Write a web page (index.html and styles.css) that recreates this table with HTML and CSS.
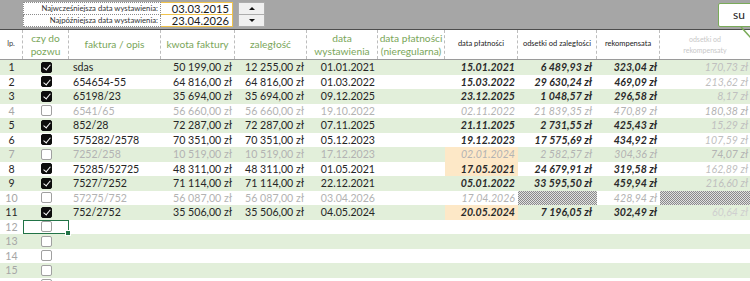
FILE: index.html
```html
<!DOCTYPE html>
<html lang="pl">
<head>
<meta charset="utf-8">
<link rel="stylesheet" href="styles.css">
</head>
<body>
<div class="sheet">
  <div class="topbar">
    <div class="filter">
      <div class="frow"><span class="flabel">Najwcześniejsza data wystawienia:</span><span class="fval">03.03.2015</span></div>
      <div class="frow"><span class="flabel">Najpóźniejsza data wystawienia:</span><span class="fval">23.04.2026</span></div>
    </div>
    <div class="spin">
      <button class="sbtn"><span class="tri up"></span></button>
      <button class="sbtn"><span class="tri down"></span></button>
    </div>
  </div>

  <div class="row head">
    <div class="h lp">lp.</div>
    <div class="h g">czy do<br>pozwu</div>
    <div class="h g">faktura / opis</div>
    <div class="h g">kwota faktury</div>
    <div class="h g">zaległość</div>
    <div class="h g">data<br>wystawienia</div>
    <div class="h g">data płatności<br>(nieregularna)</div>
    <div class="h k">data płatności</div>
    <div class="h k">odsetki od zaległości</div>
    <div class="h k">rekompensata</div>
    <div class="h lg">odsetki od<br>rekompensaty</div>
  </div>

  <div class="body">
    <div class="row z"><div class="c n">1</div><div class="c cb"><span class="box on"></span></div><div class="c t">sdas</div><div class="c r">50 199,00 zł</div><div class="c r">12 255,00 zł</div><div class="c r">01.01.2021</div><div class="c"></div><div class="c r i">15.01.2021</div><div class="c r i p5">6 489,93 zł</div><div class="c r i">323,04 zł</div><div class="c r ig">170,73 zł</div></div>
    <div class="row"><div class="c n">2</div><div class="c cb"><span class="box on"></span></div><div class="c t">654654-55</div><div class="c r">64 816,00 zł</div><div class="c r">64 816,00 zł</div><div class="c r">01.03.2022</div><div class="c"></div><div class="c r i">15.03.2022</div><div class="c r i p5">29 630,24 zł</div><div class="c r i">469,09 zł</div><div class="c r ig">213,62 zł</div></div>
    <div class="row z"><div class="c n">3</div><div class="c cb"><span class="box on"></span></div><div class="c t">65198/23</div><div class="c r">35 694,00 zł</div><div class="c r">35 694,00 zł</div><div class="c r">09.12.2025</div><div class="c"></div><div class="c r i">23.12.2025</div><div class="c r i p5">1 048,57 zł</div><div class="c r i">296,58 zł</div><div class="c r ig">8,17 zł</div></div>
    <div class="row off"><div class="c n">4</div><div class="c cb"><span class="box"></span></div><div class="c t">6541/65</div><div class="c r">56 660,00 zł</div><div class="c r">56 660,00 zł</div><div class="c r">19.10.2022</div><div class="c"></div><div class="c r i">02.11.2022</div><div class="c r i p5">21 839,35 zł</div><div class="c r i">470,89 zł</div><div class="c r ig">180,38 zł</div></div>
    <div class="row z"><div class="c n">5</div><div class="c cb"><span class="box on"></span></div><div class="c t">852/28</div><div class="c r">72 287,00 zł</div><div class="c r">72 287,00 zł</div><div class="c r">07.11.2025</div><div class="c"></div><div class="c r i">21.11.2025</div><div class="c r i p5">2 731,55 zł</div><div class="c r i">425,43 zł</div><div class="c r ig">15,29 zł</div></div>
    <div class="row"><div class="c n">6</div><div class="c cb"><span class="box on"></span></div><div class="c t">575282/2578</div><div class="c r">70 351,00 zł</div><div class="c r">70 351,00 zł</div><div class="c r">05.12.2023</div><div class="c"></div><div class="c r i">19.12.2023</div><div class="c r i p5">17 575,69 zł</div><div class="c r i">434,92 zł</div><div class="c r ig">107,59 zł</div></div>
    <div class="row z off"><div class="c n">7</div><div class="c cb"><span class="box"></span></div><div class="c t">7252/258</div><div class="c r">10 519,00 zł</div><div class="c r">10 519,00 zł</div><div class="c r">17.12.2023</div><div class="c"></div><div class="c r i peach">02.01.2024</div><div class="c r i p5">2 582,57 zł</div><div class="c r i">304,36 zł</div><div class="c r ig">74,07 zł</div></div>
    <div class="row"><div class="c n">8</div><div class="c cb"><span class="box on"></span></div><div class="c t">75285/52725</div><div class="c r">48 311,00 zł</div><div class="c r">48 311,00 zł</div><div class="c r">01.05.2021</div><div class="c"></div><div class="c r i peach">17.05.2021</div><div class="c r i p5">24 679,91 zł</div><div class="c r i">319,58 zł</div><div class="c r ig">162,89 zł</div></div>
    <div class="row z"><div class="c n">9</div><div class="c cb"><span class="box on"></span></div><div class="c t">7527/7252</div><div class="c r">71 114,00 zł</div><div class="c r">71 114,00 zł</div><div class="c r">22.12.2021</div><div class="c"></div><div class="c r i">05.01.2022</div><div class="c r i p5">33 595,50 zł</div><div class="c r i">459,94 zł</div><div class="c r ig">216,60 zł</div></div>
    <div class="row off"><div class="c n">10</div><div class="c cb"><span class="box"></span></div><div class="c t">57275/752</div><div class="c r">56 087,00 zł</div><div class="c r">56 087,00 zł</div><div class="c r">03.04.2026</div><div class="c"></div><div class="c r i">17.04.2026</div><div class="c hatch"></div><div class="c r i">428,94 zł</div><div class="c hatch"></div></div>
    <div class="row z"><div class="c n">11</div><div class="c cb"><span class="box on"></span></div><div class="c t">752/2752</div><div class="c r">35 506,00 zł</div><div class="c r">35 506,00 zł</div><div class="c r">04.05.2024</div><div class="c"></div><div class="c r i peach">20.05.2024</div><div class="c r i p5">7 196,05 zł</div><div class="c r i">302,49 zł</div><div class="c r ig lighter">60,64 zł</div></div>
    <div class="row empty"><div class="c n">12</div><div class="c cb sel"><span class="box"></span></div></div>
    <div class="row z empty"><div class="c n">13</div><div class="c cb"><span class="box"></span></div></div>
    <div class="row empty"><div class="c n">14</div><div class="c cb"><span class="box"></span></div></div>
    <div class="row z empty"><div class="c n">15</div><div class="c cb"><span class="box"></span></div></div>
    <div class="row empty"><div class="c n">16</div><div class="c cb"><span class="box"></span></div></div>
  </div>

  <div class="callout"><span>su</span></div>
  <svg class="pointer" width="20" height="16" viewBox="0 0 20 16"><line x1="3" y1="1" x2="14" y2="13" stroke="#7aab59" stroke-width="1.6"/></svg>
</div>
</body>
</html>
```

FILE: styles.css
```css
* { box-sizing: border-box; }
html, body { margin: 0; padding: 0; }
body {
  width: 750px;
  height: 281px;
  overflow: hidden;
  background: #fff;
  font-family: Lato, "Open Sans", "Liberation Sans", sans-serif;
  color: #262626;
}
.sheet { position: relative; width: 750px; }

.topbar {
  height: 30px;
  background: #a6a6a6;
  border-bottom: 1px solid #4d4d4d;
  display: flex;
  align-items: flex-start;
  padding: 2px 0 0 23px;
}
.filter {
  display: flex;
  flex-direction: column;
  background: #fff;
}
.frow {
  display: flex;
  height: 12.5px;
}
.flabel {
  width: 138px;
  border: 1px dotted #8c8c8c;
  font-size: 7.7px;
  line-height: 10.5px;
  text-align: right;
  padding-right: 2px;
  color: #333;
  white-space: nowrap;
}
.frow + .frow .flabel { border-top: none; }
.fval {
  width: 72px;
  border: 1px solid #f0c24b;
  border-left: none;
  font-size: 11.2px;
  line-height: 11px;
  text-align: right;
  padding-right: 3px;
  color: #1a1a1a;
  white-space: nowrap;
}
.frow + .frow .fval { border-top: none; }
.spin {
  display: flex;
  flex-direction: column;
  margin-left: 5px;
}
.sbtn {
  width: 27px;
  height: 12.5px;
  margin: 0;
  padding: 0;
  background: #f0f0f0;
  border: 1px solid #adadad;
  display: flex;
  align-items: center;
  justify-content: center;
}
.sbtn + .sbtn { border-top: none; }
.tri { width: 0; height: 0; border-left: 3px solid transparent; border-right: 3px solid transparent; }
.tri.up { border-bottom: 3px solid #111; }
.tri.down { border-top: 3px solid #111; }

.row {
  display: grid;
  grid-template-columns: 23px 46px 92px 74px 72px 71px 67px 73px 79px 63px 90px;
  height: 14.5px;
}
.row.z { background: #e2efda; }

.head {
  height: 30px;
  background: #fff;
  border-bottom: 1px solid #9a9a9a;
}
.h {
  display: flex;
  align-items: center;
  justify-content: center;
  text-align: center;
  border-right: 1px dashed #bdbdbd;
  font-size: 10.2px;
  line-height: 12.5px;
  white-space: nowrap;
}
.h:last-child { border-right: none; }
.h.lp { font-size: 7.5px; color: #404040; }
.h.g { color: #7aa65a; }
.h.k { font-size: 7.5px; color: #1a1a1a; }
.h.lg { font-size: 7px; line-height: 11px; color: #c8c8c8; }

.c {
  font-size: 10.6px;
  line-height: 14.5px;
  white-space: nowrap;
  overflow: hidden;
  position: relative;
}
.c.n { text-align: center; }
.c.t { padding-left: 4px; }
.c.r { text-align: right; padding-right: 3px; }
.c.p5 { padding-right: 5px; }
.c.i { font-style: italic; font-weight: 700; color: #2a2a2a; }
.c.ig { font-style: italic; color: #bfbfbf; padding-right: 2px; }
.c.ig.lighter { color: #cfcfcf; }
.c.peach { background: #fde8c7; }
.c.hatch {
  background: repeating-conic-gradient(#8a8a8a 0 25%, #e0e0e0 0 50%) 0 0 / 2px 2px;
}
.cb { display: flex; align-items: center; justify-content: center; padding-left: 1px; }
.box {
  width: 11px;
  height: 11px;
  border: 1px solid #a0a0a0;
  border-radius: 2px;
  background: #fff;
  position: relative;
}
.box.on { background: #0d0d0d; border-color: #0d0d0d; }
.box.on::after {
  content: "";
  position: absolute;
  left: 3px;
  top: 0.5px;
  width: 3px;
  height: 6px;
  border: solid #fff;
  border-width: 0 1.6px 1.6px 0;
  transform: rotate(40deg);
}

.off .c, .off .c.i { color: #b3b3b3; font-weight: 400; }
.off .c.n { color: #a6a6a6; }
.empty .c.n { color: #a6a6a6; }

.sel { box-shadow: inset 0 0 0 1px #217346; overflow: visible; }
.sel::after {
  content: "";
  position: absolute;
  right: -2px;
  bottom: -2px;
  width: 4px;
  height: 4px;
  background: #217346;
  border: 1px solid #fff;
}

.callout {
  position: absolute;
  left: 718px;
  top: 3px;
  width: 50px;
  height: 24px;
  background: #fff;
  border: 1.5px solid #7aab59;
  border-radius: 2px;
  font-size: 12px;
  line-height: 21px;
  padding-left: 14px;
  color: #1a1a1a;
}
.pointer {
  position: absolute;
  left: 738px;
  top: 26px;
}
```
